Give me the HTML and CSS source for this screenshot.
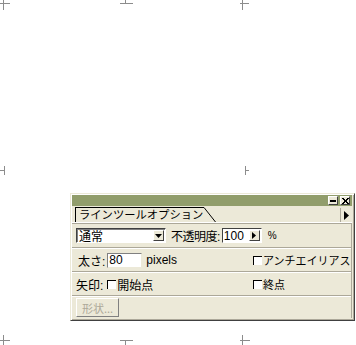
FILE: index.html
```html
<!DOCTYPE html>
<html lang="ja">
  <head>
    <meta charset="UTF-8" />
    <title>ラインツールオプション</title>
    <link rel="stylesheet" href="styles.css">
  </head>
  <body>
    <svg class="marks" width="356" height="345" viewBox="0 0 356 345">
      <g stroke="#8c8c8c" stroke-width="1" fill="none">
        <path d="M0 3.5H10M3.5 0V10" />
        <path d="M120 3.5H133M125.5 0V3.5" />
        <path d="M242.5 0V10M240 3.5H249" />
        <path d="M0 170.5H4M4.5 166V175" />
        <path d="M245.5 166V175M245 170.5H249" />
        <path d="M0 340.5H10M3.5 335V345" />
        <path d="M120 340.5H133M125.5 340.5V345" />
        <path d="M242.5 335V345M240 340.5H250" />
      </g>
    </svg>

    <div class="palette">
      <div class="titlebar">
        <span class="tbtn min"></span>
        <span class="tbtn close">
          <svg width="7" height="6" viewBox="0 0 7 6"><path d="M0 0L6 6M1 0L7 6M6 0L0 6M7 0L1 6" stroke="#000" stroke-width="1" /></svg>
        </span>
      </div>

      <div class="tabrow">
        <div class="tab">ラインツールオプション</div>
        <svg class="tab-edge" width="13" height="15" viewBox="0 0 13 15"><path d="M0 0.5H1L12.5 15" stroke="#000" fill="none" /></svg>
        <div class="menu-btn">
          <svg width="6" height="9" viewBox="0 0 6 9"><path d="M0 0L5 4.5L0 9Z" fill="#000" /></svg>
        </div>
      </div>

      <div class="body">
        <div class="row row-mode">
          <div class="select">
            <span class="select-text">通常</span>
            <span class="drop">
              <svg width="7" height="4" viewBox="0 0 7 4"><path d="M0 0H7L3.5 4Z" fill="#000" /></svg>
            </span>
          </div>
          <span class="label opacity-label">不透明度:</span>
          <div class="field opacity">
            <span>100</span>
            <span class="step">
              <svg width="4" height="7" viewBox="0 0 4 7"><path d="M0 0L4 3.5L0 7Z" fill="#000" /></svg>
            </span>
          </div>
          <span class="pct">%</span>
        </div>

        <div class="row">
          <span class="label width-label">太さ:</span>
          <div class="field weight"><span>80</span></div>
          <span class="unit">pixels</span>
          <label class="check right"><span class="box"></span>アンチエイリアス</label>
        </div>

        <div class="row">
          <span class="label arrow-label">矢印:</span>
          <label class="check"><span class="box"></span>開始点</label>
          <label class="check right"><span class="box"></span>終点</label>
        </div>

        <div class="row row-last">
          <button class="shape" disabled>形状...</button>
        </div>
      </div>
    </div>
  </body>
</html>
```

FILE: styles.css
```css
body {
  margin: 0;
  width: 356px;
  height: 345px;
  background: #fff;
  position: relative;
  overflow: hidden;
  font-family: "Liberation Sans", "Noto Sans CJK JP", sans-serif;
  font-size: 11px;
  color: #000;
}
.marks {
  position: absolute;
  left: 0;
  top: 0;
}
.palette {
  position: absolute;
  left: 70px;
  top: 193px;
  width: 285px;
  height: 128px;
  box-sizing: border-box;
  background: #ece9d8;
  border-top: 1px solid #ece9d8;
  border-left: 1px solid #ece9d8;
  border-right: 1px solid #404040;
  border-bottom: 1px solid #404040;
  box-shadow: inset 1px 1px 0 #fff, inset -1px -1px 0 #aca899;
  display: flex;
  flex-direction: column;
  padding: 1px 2px 2px 1px;
}
.titlebar {
  height: 11px;
  background: #919d6b;
  display: flex;
  justify-content: flex-end;
  align-items: center;
  gap: 2px;
  padding-right: 2px;
}
.tbtn {
  width: 10px;
  height: 9px;
  box-sizing: border-box;
  background: #ece9d8;
  border-top: 1px solid #fff;
  border-left: 1px solid #fff;
  border-right: 1px solid #404040;
  border-bottom: 1px solid #404040;
  display: flex;
  align-items: center;
  justify-content: center;
}
.min::after {
  content: "";
  width: 6px;
  height: 2px;
  background: #000;
  margin-top: 1px;
}
.close svg {
  display: block;
}
.tabrow {
  height: 16px;
  display: flex;
  align-items: flex-end;
  border-bottom: 1px solid #fff;
  box-shadow: 0 1px 0 #aca899;
}
.tab {
  margin-left: 3px;
  height: 14px;
  line-height: 14px;
  padding: 0 0 0 3px;
  border-top: 1px solid #000;
  border-left: 1px solid #000;
  background: #ece9d8;
  font-size: 11.3px;
}
.tab-edge {
  display: block;
}
.menu-btn {
  margin-left: auto;
  width: 12px;
  height: 14px;
  box-sizing: border-box;
  border-left: 1px solid #aca899;
  display: flex;
  align-items: center;
  justify-content: center;
}
.body {
  flex: 1;
  display: flex;
  flex-direction: column;
  margin-top: 1px;
  border-right: 1px solid #aca899;
}
.row {
  display: flex;
  align-items: center;
  height: 22px;
  padding-left: 4px;
  border-bottom: 1px solid #aca899;
  box-shadow: 0 1px 0 #fff;
  margin-bottom: 1px;
  white-space: nowrap;
}
.row-mode {
  height: 23px;
}
.row-last {
  border-bottom: none;
  box-shadow: none;
  margin-bottom: 0;
  flex: 1;
  align-items: flex-start;
  padding-top: 1px;
}
.select {
  width: 90px;
  height: 15px;
  box-sizing: border-box;
  background: #fff;
  border-top: 1px solid #404040;
  border-left: 1px solid #404040;
  border-right: 1px solid #fff;
  border-bottom: 1px solid #fff;
  box-shadow: inset 1px 1px 0 #808080;
  display: flex;
  align-items: center;
  padding-left: 2px;
}
.select-text {
  flex: 1;
  font-size: 12px;
}
.drop,
.step {
  width: 11px;
  height: 11px;
  box-sizing: border-box;
  background: #ece9d8;
  border-top: 1px solid #fff;
  border-left: 1px solid #fff;
  border-right: 1px solid #404040;
  border-bottom: 1px solid #404040;
  display: flex;
  align-items: center;
  justify-content: center;
  margin-right: 1px;
}
.label {
  font-size: 12px;
}
.opacity-label {
  margin-left: 5px;
  letter-spacing: -0.5px;
}
.field {
  height: 15px;
  box-sizing: border-box;
  background: #fff;
  border-top: 1px solid #404040;
  border-left: 1px solid #404040;
  border-right: 1px solid #fff;
  border-bottom: 1px solid #fff;
  display: flex;
  align-items: center;
  padding-left: 1px;
  font-size: 12px;
}
.opacity {
  width: 40px;
  margin-left: 2px;
}
.opacity span:first-child {
  flex: 1;
}
.pct {
  margin-left: 6px;
  font-size: 10px;
}
.width-label {
  margin-left: 2px;
}
.weight {
  width: 35px;
  margin-left: 2px;
  border-color: #808080 #ece9d8 #ece9d8 #808080;
}
.unit {
  margin-left: 4px;
  font-size: 12px;
}
.check {
  display: flex;
  align-items: center;
  font-size: 12px;
  margin-left: 4px;
}
.check.right {
  margin-left: auto;
  width: 98px;
  flex-shrink: 0;
  font-size: 11px;
}
.box {
  flex-shrink: 0;
  width: 9px;
  height: 9px;
  box-sizing: border-box;
  background: #fff;
  border-top: 1px solid #000;
  border-left: 1px solid #000;
  margin-right: 1px;
}
.shape {
  width: 43px;
  height: 19px;
  padding: 0;
  font-family: "Noto Sans CJK JP", sans-serif;
  font-size: 11px;
  color: #aca899;
  background: #ece9d8;
  border-top: 1px solid #fff;
  border-left: 1px solid #fff;
  border-right: 1px solid #808080;
  border-bottom: 1px solid #808080;
}
```
